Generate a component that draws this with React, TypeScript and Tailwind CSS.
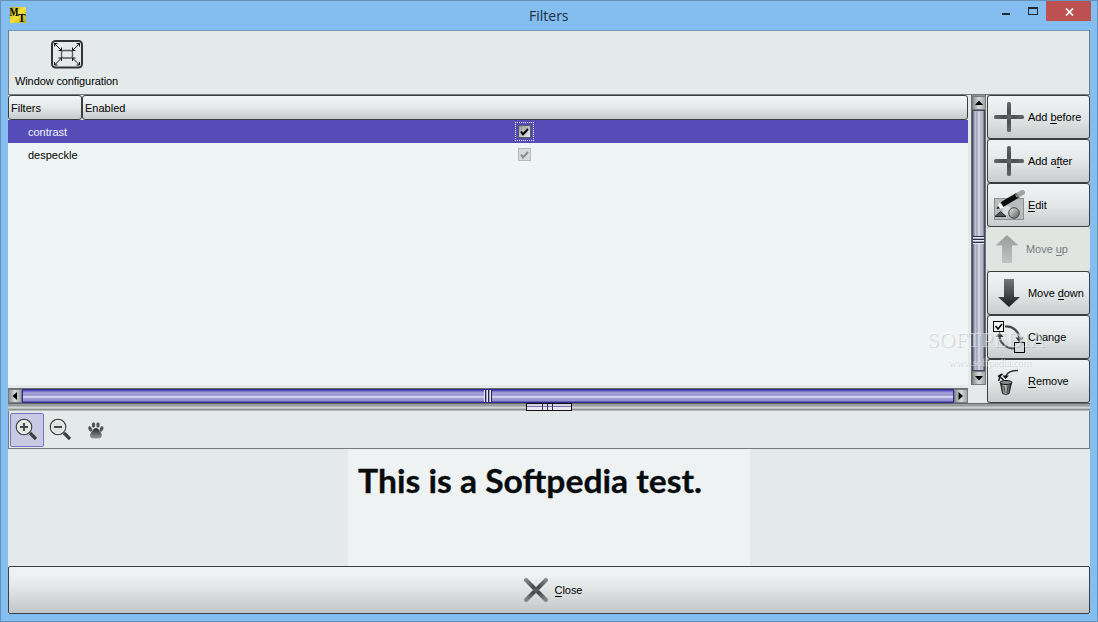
import { useState, type ReactNode } from 'react';
import clsx from 'clsx';

interface Filter {
  name: string;
  enabled: boolean;
}

interface Action {
  id: string;
  before: string;
  key: string;
  after: string;
  icon: ReactNode;
  disabled?: boolean;
}

const filters: Filter[] = [
  { name: 'contrast', enabled: true },
  { name: 'despeckle', enabled: true },
];

const PlusIcon = () => (
  <svg width="30" height="30" viewBox="0 0 30 30" className="shrink-0">
    <defs>
      <radialGradient id="plus" gradientUnits="userSpaceOnUse" cx="15" cy="15" r="15">
        <stop offset="0" stopColor="#666a6a" />
        <stop offset="0.3" stopColor="#494d4d" />
        <stop offset="1" stopColor="#656969" />
      </radialGradient>
    </defs>
    <rect x="13" y="0" width="4" height="30" rx="1.5" fill="url(#plus)" />
    <rect x="0" y="13" width="30" height="4" rx="1.5" fill="url(#plus)" />
  </svg>
);

const EditIcon = () => (
  <svg width="31" height="30" viewBox="0 0 31 30" className="shrink-0">
    <defs>
      <linearGradient id="ball" x1="0" y1="0" x2="1" y2="1">
        <stop offset="0" stopColor="#eeeeee" />
        <stop offset="1" stopColor="#555858" />
      </linearGradient>
    </defs>
    <rect x="0.5" y="8.5" width="29" height="21" fill="#b8bcbc" stroke="#8b8f8f" />
    <path d="M1 26.500 6.500 21.500 12 26.500z" fill="#555" stroke="#222" />
    <circle cx="13" cy="20.500" r="4.500" fill="#d9dcdc" />
    <circle cx="20" cy="23" r="5.300" fill="url(#ball)" stroke="#444" />
    <path d="M3 19 5.500 12.500 10 18z" fill="#fff" />
    <path d="M2.500 19 4 16 6 18.500z" fill="#111" />
    <path d="M8 14.500 24 5" stroke="#0c0c0c" strokeWidth="5.500" />
    <path d="M24 5 28.500 2.500" stroke="#a0a4a4" strokeWidth="5" strokeLinecap="round" />
    <path d="M22 3.500 25 8" stroke="#555" />
  </svg>
);

const UpIcon = () => (
  <svg width="28" height="30" viewBox="0 0 28 30" className="shrink-0">
    <defs>
      <linearGradient id="up" x1="0" y1="0" x2="0" y2="1">
        <stop offset="0" stopColor="#989d9b" />
        <stop offset="1" stopColor="#bfc3c1" />
      </linearGradient>
    </defs>
    <path d="M13 1 24.500 11.500H18V29H8V11.500H1.500z" fill="url(#up)" />
  </svg>
);

const DownIcon = () => (
  <svg width="30" height="30" viewBox="0 0 30 30" className="shrink-0">
    <defs>
      <linearGradient id="down" x1="0" y1="0" x2="0" y2="1">
        <stop offset="0" stopColor="#737777" />
        <stop offset="1" stopColor="#1b1f1f" />
      </linearGradient>
    </defs>
    <path d="M10 1H20V19H26L15 29 4 19H10z" fill="url(#down)" />
  </svg>
);

const ChangeIcon = () => (
  <svg width="34" height="34" viewBox="0 0 34 34" className="shrink-0" fill="none">
    <path d="M12 6.500C20 6 26 11 26.500 19" stroke="#484c4c" strokeWidth="2.200" />
    <path d="M22.500 17.500H30.500L26.500 22.500z" fill="#3b3f3f" />
    <path d="M21 28.500C13 28.500 6.500 23 6.500 15" stroke="#484c4c" strokeWidth="2.200" />
    <path d="M2.500 17H10.500L6.500 12z" fill="#3b3f3f" />
    <rect x="0.500" y="1.500" width="10" height="10" fill="#f3f5f5" stroke="#000" />
    <path d="m2.500 6 2.500 3L9 4" stroke="#000" strokeWidth="1.500" />
    <rect x="21.500" y="22.500" width="10" height="10" fill="#d4d7d7" stroke="#000" />
  </svg>
);

const RemoveIcon = () => (
  <svg width="24" height="30" viewBox="0 0 24 30" className="shrink-0" fill="none">
    <defs>
      <linearGradient id="bin" x1="0" y1="0" x2="1" y2="0">
        <stop offset="0" stopColor="#222" />
        <stop offset="0.4" stopColor="#c5c8c8" />
        <stop offset="1" stopColor="#1c1c1c" />
      </linearGradient>
    </defs>
    <path d="M22 4.500C16 4.500 11.500 6 10 10" stroke="#333" strokeWidth="1.500" />
    <path d="M6.500 9.500H13L9.500 13z" fill="#111" />
    <path d="M2.500 15 5 8.500M2 10.500 6.500 8M5 11.500 7.500 14" stroke="#111" strokeWidth="1.500" />
    <path d="M4.500 17 6.500 27.500Q10 29.500 13 27.500L15.500 17z" fill="url(#bin)" stroke="#222" />
    <path d="M8 20 9 27M12 20 11 27" stroke="#444" />
    <ellipse cx="10" cy="16.500" rx="6" ry="2" fill="#888c8c" stroke="#111" />
  </svg>
);

const actions: Action[] = [
  { id: 'add-before', before: 'Add ', key: 'b', after: 'efore', icon: <PlusIcon /> },
  { id: 'add-after', before: 'Add a', key: 'f', after: 'ter', icon: <PlusIcon /> },
  { id: 'edit', before: '', key: 'E', after: 'dit', icon: <EditIcon /> },
  { id: 'up', before: 'Move ', key: 'u', after: 'p', icon: <UpIcon />, disabled: true },
  { id: 'down', before: 'Move ', key: 'd', after: 'own', icon: <DownIcon /> },
  { id: 'change', before: 'C', key: 'h', after: 'ange', icon: <ChangeIcon /> },
  { id: 'remove', before: '', key: 'R', after: 'emove', icon: <RemoveIcon /> },
];

function Label({ before = '', k, after }: { before?: string; k: string; after: string }) {
  return (
    <span className="whitespace-pre tracking-[-0.05px]">
      {before}
      <span className="border-b border-current">{k}</span>
      {after}
    </span>
  );
}

function ArrowButton({ path }: { path: string }) {
  return (
    <div className="flex h-[14px] w-[14px] shrink-0 items-center justify-center border border-[#777b7b] bg-linear-to-r from-[#8e9292] via-[#d8dbdb] to-[#a0a4a4]">
      <svg width="10" height="10" viewBox="0 0 10 10" className="shrink-0">
        <path d={path} fill="#000" />
      </svg>
    </div>
  );
}

function Magnifier({ plus }: { plus?: boolean }) {
  return (
    <svg width="24" height="24" viewBox="0 0 24 24" fill="none">
      <path d="m15 15 6 6" stroke="#3c4040" strokeWidth="3.200" />
      <circle cx="9" cy="9" r="7.700" fill="#dfe4e1" stroke="#3f4545" strokeWidth="1.300" />
      <circle cx="9" cy="9" r="6.500" stroke="#f4f7f5" />
      <path d={plus ? 'M5 9H13M9 5V13' : 'M5 9H13'} stroke="#454a4a" strokeWidth="2" />
    </svg>
  );
}

function CheckBox({ checked, dim }: { checked: boolean; dim?: boolean }) {
  return (
    <svg width="13" height="13" viewBox="0 0 13 13" fill="none">
      <defs>
        <linearGradient id="box" x1="0" y1="0" x2="1" y2="1">
          <stop offset="0" stopColor="#8f9393" />
          <stop offset="1" stopColor="#f0f2f2" />
        </linearGradient>
      </defs>
      <rect x="0.500" y="0.500" width="12" height="12" fill={dim ? '#d5d9d9' : 'url(#box)'} stroke={dim ? '#b5b9b9' : '#555959'} />
      {checked && <path d="m3 6.500 2 3L10 4" stroke={dim ? '#888c8c' : '#000'} strokeWidth="2" />}
    </svg>
  );
}

export default function App() {
  const [selected, setSelected] = useState(0);

  return (
    <main className="relative flex h-[622px] w-[1098px] cursor-default flex-col overflow-hidden border border-[#6692b9] bg-[#84bdf0] px-[7px] pb-[7px] font-['Liberation_Sans',Arial,sans-serif] text-[11px] leading-[13px] text-black">
      {/* Title bar */}
      <header className="flex h-[29px] shrink-0 items-start">
        <div className="flex w-[521px] pt-[6px]">
          <svg width="18" height="17" viewBox="0 0 18 17" className="ml-px">
            <defs>
              <linearGradient id="logo" x1="0" y1="0" x2="1" y2="1">
                <stop offset="0" stopColor="#b9a52c" />
                <stop offset="0.5" stopColor="#f2e23c" />
                <stop offset="1" stopColor="#bda81a" />
              </linearGradient>
            </defs>
            <rect x="1" y="0" width="16" height="16" fill="url(#logo)" />
            <text x="0.500" y="9" fontFamily="Liberation Serif, serif" fontSize="12" fontWeight="bold" textLength="9" lengthAdjust="spacingAndGlyphs">M</text>
            <text x="9" y="15" fontFamily="Liberation Serif, serif" fontSize="12" fontWeight="bold" textLength="7.5" lengthAdjust="spacingAndGlyphs">T</text>
          </svg>
        </div>
        <h1 className="flex-1 pt-[5px] font-['Open_Sans',sans-serif] text-[14px] leading-[19px] text-[#1e3040]">Filters</h1>
        <div className="-mr-px flex h-5 items-start">
          <svg width="49" height="20" viewBox="0 0 49 20" fill="none">
            <path d="M5 12H13V14H5z" fill="#1d2933" />
            <path d="M31 6H41V8H31zM31 8H32V14H31zM40 8H41V14H40zM31 13H41V14H31z" fill="#1d2933" />
          </svg>
          <button className="flex h-5 w-[45px] items-center justify-center bg-[#bd5050]">
            <svg width="9" height="8" viewBox="0 0 9 8" className="mt-px ml-px">
              <path d="m1 .5 7 7M8 .5l-7 7" stroke="#fff" strokeWidth="1.700" />
            </svg>
          </button>
        </div>
      </header>

      <div className="flex h-[584px] w-[1082px] shrink-0 flex-col bg-[#e4eae9]">
        {/* Toolbar */}
        <div className="flex h-[65px] shrink-0 items-start border-t border-r border-b border-l border-[#747b7b] border-t-[#7096b8] pt-[9px] pl-[6px]">
          <button className="flex w-[103px] flex-col items-center">
            <svg width="32" height="29" viewBox="0 0 32 29" fill="none" stroke="#111">
              <rect x="1" y="1" width="30" height="26.500" rx="3.500" stroke="#303434" strokeWidth="2" />
              <rect x="10.500" y="10.500" width="11" height="7.500" rx="2" stroke="#555959" strokeWidth="1.300" />
              <path d="m3.500 3.500 7 7M28.500 3.500l-7 7M3.500 25l7-7M28.500 25l-7-7" />
              <path d="M3.500 6.500V3.500H6.500M25.500 3.500H28.500V6.500M3.500 22V25H6.500M25.500 25H28.500V22" />
              <path d="M7.500 10.500H10.500V7.500M21.500 7.500V10.500H24.500M7.500 18H10.500V21M21.500 21V18H24.500" />
            </svg>
            <span className="mt-[6px] tracking-[-0.11px] whitespace-nowrap">Window configuration</span>
          </button>
        </div>

        <div className="flex h-[308px] shrink-0">
          {/* Filter table */}
          <div className="flex w-[960px] flex-col">
            <div className="flex h-[25px] shrink-0">
              <div className="flex w-[74px] items-center rounded-[3px] border border-[#3a3e3e] bg-linear-to-b from-[#f0f4f4] from-10% via-[#e3e7e7] via-50% to-[#c5caca] pt-[2px] pl-[2px]">Filters</div>
              <div className="flex flex-1 items-center rounded-[3px] border border-[#3a3e3e] bg-linear-to-b from-[#f0f4f4] from-10% via-[#e3e7e7] via-50% to-[#c5caca] pt-[2px] pl-[2px]">Enabled</div>
            </div>
            <div className="h-[265px] bg-[#eff4f5]">
              {filters.map((filter, i) => (
                <div
                  key={filter.name}
                  onClick={() => setSelected(i)}
                  className={clsx('flex h-[23px] items-center', selected === i && 'bg-[#544db7] text-[#f0f3fb]')}
                >
                  <span className="w-[487px] pt-px pl-5">{filter.name}</span>
                  <span className="flex w-[58px] justify-center">
                    <span className={clsx('flex h-[19px] w-[19px] items-center justify-center border', selected === i ? 'border-dotted border-white' : 'border-transparent')}>
                      <CheckBox checked={filter.enabled} dim={selected !== i} />
                    </span>
                  </span>
                </div>
              ))}
            </div>
            <div className="h-[3px] bg-[#e4eae9]" />
            <div className="flex h-[15px] items-center border-t border-[#6a6e6e] bg-[#777b7b]">
              <ArrowButton path="M7 1V9L2.500 5z" />
              <div className="flex h-[14px] flex-1 items-center border border-[#302990] bg-[linear-gradient(180deg,#5b53be_0_1px,#9a98d2_2px_3px,#b4b2dd_4px,#7975c4_5px,#d0d1eb_6px_7px,#c4c5e4_8px,#8883ca_9px,#aaa9d8_10px,#524ab0_12px)] pl-[461px]">
                <div className="h-3 w-2 bg-[repeating-linear-gradient(90deg,#e8eafa_0_1px,#252042_1px_2px,#a4a5cb_2px_3px)]" />
              </div>
              <ArrowButton path="M2.500 1V9L7 5z" />
            </div>
          </div>

          <div className="ml-[3px] flex h-[290px] w-[15px] flex-col items-center border-x border-[#696d6d] bg-[#8d9191] pt-px">
            <ArrowButton path="M1 7H9L5 2.500z" />
            <div className="flex w-[13px] flex-1 flex-col items-center border border-[#484c60] bg-[linear-gradient(90deg,#7e819a_0_1px,#bfc2d1_2px_3px,#8f93a8_4px,#d0d2df_5px_7px,#a7aabd_8px,#c8cad7_9px,#6f7288_11px)] pt-[125px]">
              <div className="h-2 w-full bg-[repeating-linear-gradient(180deg,#292c48_0_1px,#e8eaf5_1px_2px,#a5a8bc_2px_3px)]" />
            </div>
            <ArrowButton path="M1 3H9L5 7.500z" />
          </div>

          {/* Actions */}
          <div className="ml-px flex w-[103px] flex-col bg-[#b9bebe]">
            {actions.map((action) => (
              <button
                key={action.id}
                disabled={action.disabled}
                className={clsx(
                  'flex h-11 w-full items-center rounded-[3px] border',
                  action.id === 'change' ? 'gap-px pl-[5px]' : action.id === 'remove' ? 'gap-2 pl-2' : action.id === 'edit' ? 'gap-[3px] pl-[6px]' : 'gap-1 pl-[6px]',
                  action.disabled
                    ? 'border-[#e0e5e2] bg-[#e0e5e2] text-[#777a7d]'
                    : 'border-[#3b3f3f] bg-linear-to-b from-[#eef2f3] from-10% via-[#e3e7e8] via-50% to-[#c8cccd]',
                )}
              >
                {action.icon}
                <Label before={action.before} k={action.key} after={action.after} />
              </button>
            ))}
          </div>
        </div>

        {/* Splitter */}
        <div className="flex h-2 shrink-0 justify-center bg-[linear-gradient(180deg,#656969_0_1px,#989c9c_1px_3px,#d0d3d3_4px_5px,#a9adad_6px,#686c6c_7px,#b8bdbd_7px_8px)]">
          <div className="flex h-2 w-[46px] border border-[#111] bg-[linear-gradient(180deg,#d5d5e8_0_2px,#77779b_2px_3px,#e8e9f5_3px_6px)] pl-[15px]">
            <div className="w-[11px] border-x border-[#343350] bg-[linear-gradient(90deg,transparent_4px,#343350_4px_5px,transparent_5px)]" />
          </div>
        </div>

        <div className="flex h-[38px] shrink-0 items-center border-r border-b border-l border-[#747b7b] pl-px">
          <button className="flex h-[34px] w-[34px] items-center justify-center rounded-[2px] border border-[#7673c3] bg-[#c8c9e3]">
            <Magnifier plus />
          </button>
          <button className="flex h-[34px] w-[34px] items-center justify-center">
            <Magnifier />
          </button>
          <button className="flex h-[34px] w-[34px] items-center justify-center pt-[2px] pl-px">
            <svg width="16" height="17" viewBox="0 0 16 17">
              <defs>
                <linearGradient id="paw" x1="0" y1="0" x2="0" y2="1">
                  <stop offset="0" stopColor="#222" />
                  <stop offset="1" stopColor="#999d9d" />
                </linearGradient>
              </defs>
              <g fill="#505454">
                <ellipse cx="5.500" cy="3" rx="1.700" ry="2.700" />
                <ellipse cx="10" cy="3" rx="1.700" ry="2.700" />
                <ellipse cx="2.200" cy="7" rx="1.700" ry="2.800" transform="rotate(-20 2 7)" />
                <ellipse cx="13.500" cy="7" rx="1.700" ry="2.800" transform="rotate(20 13.500 7)" />
              </g>
              <path d="M8 6C11 6.500 11 8.500 12.500 10C15 13 13.500 16.500 10.500 16.500H5.500C2 16.500 1 13 3.500 10C5 8.500 5 6.500 8 6z" fill="url(#paw)" />
            </svg>
          </button>
        </div>

        {/* Preview */}
        <div className="flex h-[117px] shrink-0 pl-[340px]">
          <div className="w-[402px] bg-[#eef2f3] pt-3 pl-[10px]">
            <svg width="360" height="50" viewBox="0 0 360 50">
              <text x="0" y="32" fontFamily="Lato, sans-serif" fontSize="33" fontWeight="700" fill="#080c0d" stroke="#080c0d" strokeWidth="0.3" textLength="344" lengthAdjust="spacingAndGlyphs">This is a Softpedia test.</text>
            </svg>
          </div>
        </div>

        <button className="flex h-12 shrink-0 items-center justify-center gap-[7px] rounded-[2px] border border-[#3b3f3f] bg-linear-to-b from-[#eef2f3] from-15% via-[#dfe3e4] via-50% to-[#c2c6c7] pl-2">
          <svg width="24" height="24" viewBox="0 0 24 24">
            <defs>
              <radialGradient id="cross" gradientUnits="userSpaceOnUse" cx="12" cy="12" r="16">
                <stop offset="0" stopColor="#606464" />
                <stop offset="0.25" stopColor="#454949" />
                <stop offset="1" stopColor="#8c9090" />
              </radialGradient>
            </defs>
            <path d="m2 2 20 20M22 2 2 22" stroke="url(#cross)" strokeWidth="4" strokeLinecap="round" />
          </svg>
          <Label k="C" after="lose" />
        </button>
      </div>

      {/* Watermark over the list and buttons */}
      <svg width="140" height="46" viewBox="0 0 140 46" className="pointer-events-none absolute top-[325px] left-[922px]">
        <g fontFamily="Liberation Serif, serif" fill="#969b9e" fillOpacity="0.35">
          <text x="5" y="22" fontSize="22" textLength="119" lengthAdjust="spacingAndGlyphs">SOFTPEDIA</text>
          <text x="26" y="41" fontSize="11" textLength="83">www.softpedia.com</text>
        </g>
        <g fontFamily="Liberation Serif, serif" fill="#fff" fillOpacity="0.5">
          <text x="4" y="21" fontSize="22" textLength="119" lengthAdjust="spacingAndGlyphs">SOFTPEDIA</text>
          <text x="127" y="13" fontSize="7">™</text>
          <text x="25" y="40" fontSize="11" textLength="83">www.softpedia.com</text>
        </g>
      </svg>
    </main>
  );
}
